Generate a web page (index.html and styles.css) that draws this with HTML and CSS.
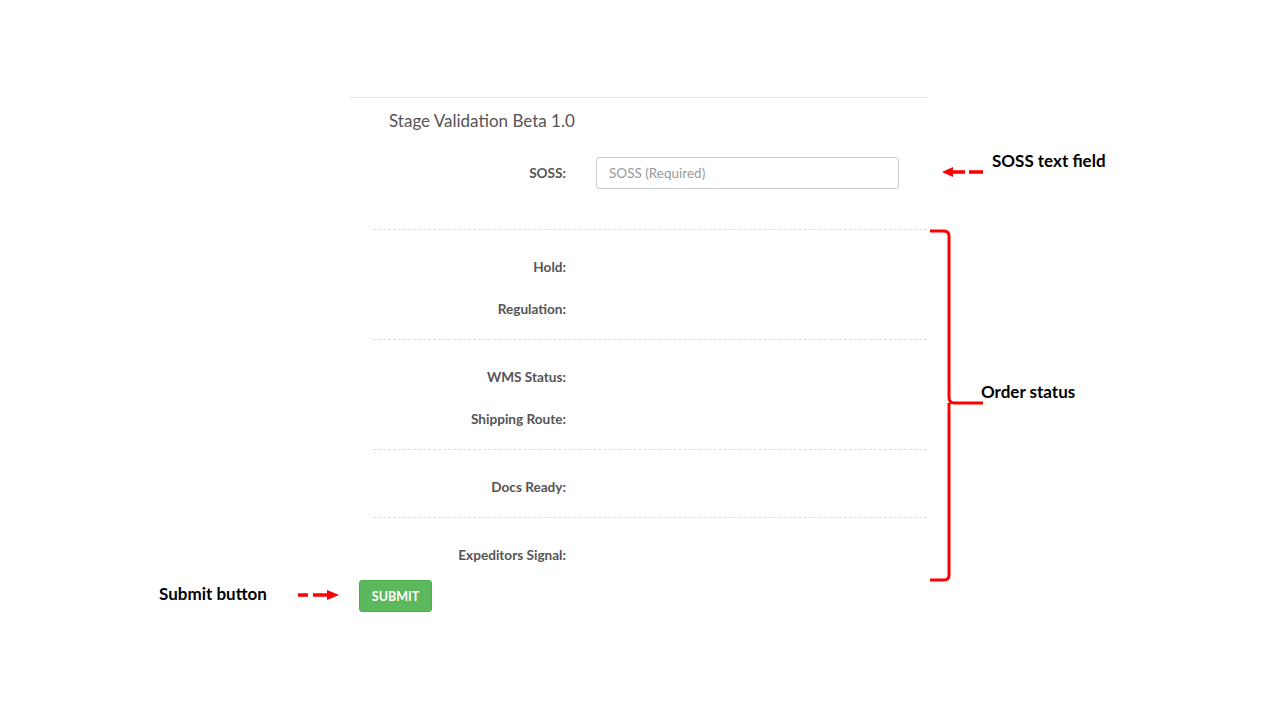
FILE: index.html
```html
<!DOCTYPE html>
<html>
<head>
<meta charset="utf-8">
<link rel="stylesheet" href="styles.css">
</head>
<body>
<div class="canvas">
  <div class="panel">
    <h1 class="title">Stage Validation Beta 1.0</h1>
    <div class="row soss-row">
      <label class="lbl">SOSS:</label>
      <input class="input" type="text" placeholder="SOSS (Required)">
    </div>
    <div class="section">
      <div class="row"><span class="lbl">Hold:</span></div>
      <div class="row"><span class="lbl">Regulation:</span></div>
    </div>
    <div class="section">
      <div class="row"><span class="lbl">WMS Status:</span></div>
      <div class="row"><span class="lbl">Shipping Route:</span></div>
    </div>
    <div class="section">
      <div class="row"><span class="lbl">Docs Ready:</span></div>
    </div>
    <div class="section last">
      <div class="row"><span class="lbl">Expeditors Signal:</span></div>
    </div>
    <button class="submit">SUBMIT</button>
  </div>

  <svg class="arrow arrow-soss" width="42" height="12" viewBox="0 0 42 12"><path d="M10 6h13M27 6h14" stroke="#f00" stroke-width="3.5"/><path d="M0 6L11 1V11Z" fill="#f00"/></svg>
  <div class="note note-soss">SOSS text field</div>
  <div class="note note-order">Order status</div>
  <svg class="bracket" width="60" height="354" viewBox="0 0 60 354">
    <path d="M0 2H14Q19 2 19 7V168Q19 174 24 174H53M19 174Q19 174 19 180V346Q19 351 14 351H0" fill="none" stroke="#f00" stroke-width="3"/>
  </svg>
  <div class="note note-submit">Submit button</div>
  <svg class="arrow arrow-submit" width="42" height="12" viewBox="0 0 42 12"><path d="M0 6h10M15 6h15" stroke="#f00" stroke-width="3.5"/><path d="M41 6L29 1V11Z" fill="#f00"/></svg>
</div>
</body>
</html>
```
FILE: styles.css
```css
html, body {
  margin: 0;
  padding: 0;
  background: #fff;
}
.canvas {
  position: relative;
  width: 1280px;
  height: 720px;
  overflow: hidden;
  font-family: Lato, "Open Sans", sans-serif;
}
.panel {
  width: 578px;
  margin-left: 350px;
  padding-top: 97px;
  display: flex;
  flex-direction: column;
}
.title {
  margin: 0;
  border-top: 1px solid #e3e3e3;
  padding: 12px 0 0 39px;
  font-size: 17px;
  font-weight: 400;
  color: #555;
  line-height: 22px;
}
.row {
  display: flex;
  align-items: center;
  height: 30px;
  margin-left: 23px;
}
.lbl {
  width: 193px;
  text-align: right;
  font-size: 13.6px;
  font-weight: 700;
  color: #555;
}
.soss-row {
  margin-top: 25px;
  height: 32px;
  margin-bottom: 40px;
}
.input {
  margin-left: 30px;
  width: 303px;
  height: 32px;
  box-sizing: border-box;
  border: 1px solid #ccc;
  border-radius: 3px;
  padding: 0 12px;
  font-family: Lato, sans-serif;
  font-size: 13.5px;
  color: #555;
  outline: none;
}
.input::placeholder {
  color: #999;
}
.section {
  margin-left: 23px;
  width: 554px;
  border-top: 1px dashed #dcdcdc;
  padding: 22px 0 15px;
  display: flex;
  flex-direction: column;
  gap: 12px;
}
.section .row {
  margin-left: 0;
}
.section.last {
  padding-bottom: 10px;
}
.submit {
  align-self: flex-start;
  margin-left: 9px;
  width: 73px;
  height: 32px;
  background: #5cb85c;
  border: 1px solid #4cae4c;
  border-radius: 3px;
  color: #fff;
  font-family: Lato, sans-serif;
  font-size: 12.5px;
  font-weight: 700;
  padding: 0;
}
.note {
  position: absolute;
  font-family: Lato, "Open Sans", sans-serif;
  font-weight: 700;
  font-size: 17px;
  line-height: 20px;
  color: #000;
}
.note-soss {
  left: 992px;
  top: 151px;
}
.note-order {
  left: 981px;
  top: 382px;
}
.note-submit {
  left: 159px;
  top: 584px;
}
.arrow {
  position: absolute;
}
.arrow-soss {
  left: 942px;
  top: 166px;
}
.arrow-submit {
  left: 298px;
  top: 589px;
}
.bracket {
  position: absolute;
  left: 930px;
  top: 229px;
}
```
